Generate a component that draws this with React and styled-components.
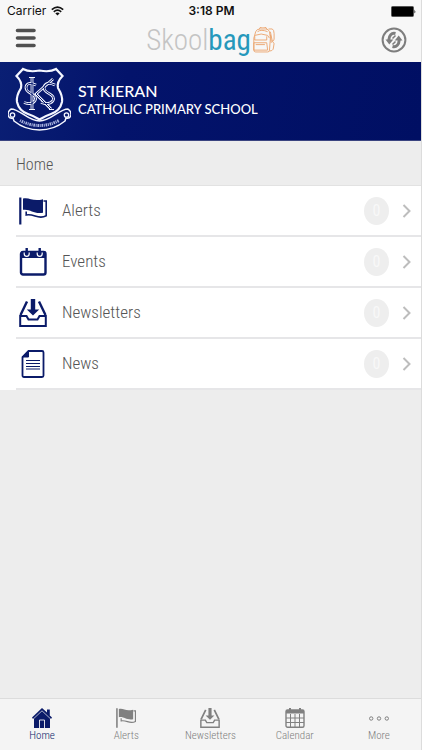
import React from 'react';
import styled, { createGlobalStyle, css } from 'styled-components';

const condensed = '"Roboto Condensed", "Liberation Sans Narrow", Roboto, sans-serif';
const navy = '#0b1b69';

const GlobalStyle = createGlobalStyle`
  * { box-sizing: border-box; }
  body { margin: 0; background: #ededed; font-family: ${condensed}; }
  button { font: inherit; color: inherit; background: none; border: 0; padding: 0; cursor: pointer; }
  svg { display: block; flex: none; }
`;

const Screen = styled.div`
  min-height: 100vh;
  display: flex;
  flex-direction: column;
  background: #ededed;
  border-right: 1px solid #dcdcdc;
`;

const StatusBar = styled.div`
  height: 22px;
  padding: 0 5px 0 7px;
  display: grid;
  grid-template-columns: 1fr auto 1fr;
  align-items: center;
  background: #f7f7f7;
  color: #111;
  font: 12px/22px Inter, sans-serif;
`;

const Carrier = styled.div`
  display: flex;
  align-items: center;
  gap: 5px;
`;

const Clock = styled.time`
  font-weight: 600;
`;

const Battery = styled.div`
  display: flex;
  justify-content: flex-end;
`;

const Header = styled.header`
  height: 40px;
  padding: 5px 14px 0;
  display: grid;
  grid-template-columns: 1fr auto 1fr;
  align-items: start;
  background: #f7f7f7;
`;

const IconButton = styled.button`
  display: flex;
  justify-self: ${(p) => (p.$end ? 'end' : 'start')};
`;

const Logo = styled.div`
  display: flex;
  align-items: center;
  font: 300 29px/26px ${condensed};
  color: #c4c4c4;
`;

const LogoAccent = styled.span`
  margin-right: 1px;
  color: #2598bb;
  font-weight: 400;
`;

const Banner = styled.section`
  height: 79px;
  padding: 0 8px;
  display: flex;
  align-items: center;
  gap: 7px;
  border-bottom: 1px solid #3a4480;
  background: linear-gradient(100deg, #0a1f74 0%, #03136b 30%, #000f63 100%);
  color: #fff;
`;

const SchoolName = styled.h1`
  margin: 0;
  display: flex;
  flex-direction: column;
  font: 500 13px/16px Lato, sans-serif;
`;

const SchoolTitle = styled.span`
  font-size: 16px;
  line-height: 20px;
  margin-top: -4px;
`;

const SectionTitle = styled.h2`
  margin: 0;
  height: 45px;
  padding: 2px 16px 0;
  border-bottom: 1px solid #e2e2e2;
  font-size: 16px;
  font-weight: 300;
  line-height: 44px;
  color: #555;
`;

const List = styled.ul`
  margin: 0;
  padding: 0 0 0 16px;
  list-style: none;
  background: #fff;
`;

const Row = styled.li`
  border-bottom: 2px solid #e6e6e8;
`;

const RowButton = styled.button`
  width: 100%;
  height: 49px;
  display: flex;
  align-items: center;
  text-align: left;
`;

const RowIcon = styled.span`
  width: 46px;
  padding-left: 3px;
  color: ${navy};
`;

const RowLabel = styled.span`
  flex: 1;
  padding-bottom: 2px;
  font-size: 17px;
  font-weight: 300;
  line-height: 24px;
  color: #555;
`;

const Count = styled.span`
  width: 25px;
  height: 28px;
  margin-right: 13px;
  border-radius: 50%;
  background: #eeeeee;
  color: #f8f8f8;
  font-size: 16px;
  line-height: 28px;
  text-align: center;
`;

const Chevron = styled.svg`
  margin-right: 9px;
`;

const TabBar = styled.nav`
  height: 52px;
  margin-top: auto;
  display: grid;
  grid-template-columns: repeat(5, 1fr);
  border-top: 1px solid #dcdcdc;
  background: #f4f4f4;
`;

const Tab = styled.button`
  && {
    display: flex;
    flex-direction: column;
    align-items: center;
    padding-top: 9px;
    gap: 1px;
    color: #808080;
    font-size: 11px;
    font-weight: 300;
    line-height: 14px;
    ${(p) => p.$active && css`color: ${navy};`}
  }
`;

const FlagIcon = ({ size }) => (
  <svg width={size} height={size} viewBox="0 0 28 28" fill="none" stroke="currentColor">
    <path d="M1.300 .5v27" strokeWidth="2.200" />
    <path d="M4 1.500c7-1.500 9 3.500 20 .8v13.500c-10 1.500-12-4-20-3z" fill="currentColor" stroke="none" />
    <path d="M24.500 4h2.700v14.800c-8 4.500-12-2.500-20-.8V14.500" strokeWidth="1.600" />
  </svg>
);

const EventsIcon = () => (
  <svg width="28" height="28" viewBox="0 0 28 28" fill="none" stroke={navy}>
    <rect x="2" y="4" width="24.500" height="22.500" rx="2" strokeWidth="2.400" />
    <path d="M2 3.500h24.500v6.500H2z" fill={navy} stroke="none" />
    <path d="M5.200 4.500v1.300a2.500 2.500 0 0 0 5 0V4.500M18.200 4.500v1.300a2.500 2.500 0 0 0 5 0V4.500" stroke="#fff" strokeWidth="1.200" />
    <path d="M7.700 0v6M20.700 0v6" strokeWidth="2.400" />
  </svg>
);

const InboxIcon = ({ size }) => (
  <svg width={size} height={size} viewBox="0 0 28 28" fill="none" stroke="currentColor" strokeWidth="2">
    <path d="M8 2.500 1.500 16M20 2.500l6.500 13.500" strokeWidth="2.400" />
    <path d="M1.200 17h6.300l2 3.500h9l2-3.500h6.300v10H1.200z" />
    <path d="M11.800 0h4.400v10.500h4L14 16.500l-6.200-6h4z" fill="currentColor" stroke="none" />
  </svg>
);

const NewsIcon = () => (
  <svg width="28" height="28" viewBox="0 0 28 28" fill="none" stroke={navy}>
    <path d="M9.500 1H23q1.500 0 1.500 1.500v23q0 1.500-1.500 1.500H5q-1.500 0-1.500-1.500V7z" strokeWidth="1.800" />
    <path d="M9.500 1v6h-6z" fill={navy} />
    <path d="M7 10.500h14M7 13.500h14M7 16.500h14M7 19h14" strokeWidth="1" />
  </svg>
);

const HomeIcon = () => (
  <svg width="20" height="20" viewBox="0 0 20 20" fill={navy}>
    <path d="M10 0 15 4.500V1.500h2.800v6L20 9.500l-1 1.500-1-.8V20H2v-9.800L1 11 0 9.500z" />
    <path d="m1.500 10.800 8.500-8 8.500 8" fill="none" stroke="#f4f4f4" strokeWidth=".7" />
    <path d="M7.500 20v-8h5v8" fill="none" stroke="#f4f4f4" strokeWidth=".9" />
  </svg>
);

const CalendarIcon = () => (
  <svg width="20" height="20" viewBox="0 0 20 20" fill="none" stroke="currentColor">
    <rect x="1" y="2" width="18" height="17.300" rx="1.500" strokeWidth="1.400" />
    <path d="M1 2h18v3.500H1z" fill="currentColor" stroke="none" />
    <path d="M1 10h18M1 14.500h18M5.500 6v13M10 6v13M14.500 6v13" />
    <path d="M5 0v3M15 0v3" strokeWidth="2" />
  </svg>
);

const MoreIcon = () => (
  <svg width="20" height="20" viewBox="0 0 20 20" fill="none" stroke="currentColor">
    <circle cx="2.200" cy="10.500" r="1.700" />
    <circle cx="10" cy="10.500" r="1.700" />
    <circle cx="17.800" cy="10.500" r="1.700" />
  </svg>
);

const WifiIcon = () => (
  <svg width="13" height="10" viewBox="0 0 13 10" fill="none" stroke="#111" strokeWidth="1.700">
    <path d="M.8 3.600q5.700-5 11.400 0M2.800 5.800q3.700-3.200 7.400 0" />
    <path d="M4.300 7.200q2.200-1.600 4.400 0L6.500 9.600z" fill="#111" stroke="none" />
  </svg>
);

const BatteryIcon = () => (
  <svg width="25" height="11" viewBox="0 0 25 11">
    <rect x=".5" y=".5" width="22" height="10" rx="1" stroke="#555" />
    <path d="M23.500 3.500q1.500 2 0 4z" />
  </svg>
);

const MenuIcon = () => (
  <svg width="24" height="22" viewBox="0 0 24 22" stroke="#505050" strokeWidth="3.600" strokeLinecap="round">
    <path d="M3.500 3.500h16.500M3.500 11h16.500M3.500 18.500h16.500" />
  </svg>
);

const RefreshIcon = () => (
  <svg width="26" height="26" viewBox="0 0 26 26" fill="none" stroke="#7e7e7e">
    <circle cx="13" cy="13" r="11.400" strokeWidth="2" />
    <path d="M14.500 6.500C10.500 5.500 8 8.500 7.800 13M11.500 19.500c4 1 6.500-2 6.700-6.500" strokeWidth="3" />
    <path d="M4.500 12.500h7.800L8.300 17.500zM21.500 13.500h-7.800l4-5z" fill="#7e7e7e" stroke="none" />
    <path d="m11.500 11.500 3-3M11.500 17.500l3-3" strokeWidth="1.500" />
  </svg>
);

const BackpackIcon = () => (
  <svg width="23" height="26" viewBox="0 0 25 28" fill="none" stroke="#eba56e" strokeWidth="1">
    <path d="M4 5q1-3 5-3h6q3 0 4 3l1 7-1 13q0 2-2 2H4q-2 0-2-2V12z" />
    <path d="M8 2q0-2 3-2h2q3 0 3 2M6 5q4-3 11 0M3 9q7-3 14 0l2 3M3 14h13v-4M3 14v-4M2 17h14l1 8H2zM4 19h10" />
    <path d="M18 2h4q2 1 2 5v6q0 2-2 2M20 5l2 10 2 3-1 6q-1 2-4 2M20 8l1 9" />
  </svg>
);

const Crest = () => (
  <svg width="63" height="68" viewBox="0 0 63 68" fill="none" stroke="#f4f6ff">
    <path
      d="M3 42C12 42 20 54 31.500 54S51 42 60 42q3 2 3 6-1 4-5 3l-1 3Q46 63 31.500 63T6 54l-1-3q-4 1-5-3 0-4 3-6z"
      fill="#07186d"
      strokeWidth="1.500"
    />
    <circle cx="4.500" cy="48" r="2.200" strokeWidth="1.300" />
    <circle cx="58.500" cy="48" r="2.200" strokeWidth="1.300" />
    <path d="M12 53.500q19.500 10 39 0" stroke="#aab4e0" strokeWidth="3" strokeDasharray="1 .8 1.600 .7" />
    <path
      d="M15 2q6 3.500 16.500 1.500Q42 5.500 48 2l6.500 7q-6 6-4.500 12 5 8 4 14-2 9-11 12-6 2-11.500 5.500Q26 49 20 47 11 44 9 35q-1-6 4-14Q14.500 15 8.500 9z"
      fill="#07186d"
      strokeWidth="2.200"
    />
    <g strokeWidth="2.800">
      <path d="M28 18q-9-4-10 2-.5 4 5 6.500 6 3 4 7-3 5-11 2M47 18q-9-4-11 2-.5 4 5 6.500 6 3 4 7-3 5-12 2" />
      <path d="M24 11v31M45 12 28 27l15 15" />
    </g>
    <g stroke="#07186d" strokeWidth="1">
      <path d="M28 18q-9-4-10 2-.5 4 5 6.500 6 3 4 7-3 5-11 2M47 18q-9-4-11 2-.5 4 5 6.500 6 3 4 7-3 5-12 2" />
      <path d="M24 11v31M45 12 28 27l15 15" />
    </g>
    <path d="M21 10.500h6M21 42.500h6M41 42.500h5" strokeWidth="1.200" />
  </svg>
);

const items = [
  { label: 'Alerts', icon: <FlagIcon size={28} /> },
  { label: 'Events', icon: <EventsIcon /> },
  { label: 'Newsletters', icon: <InboxIcon size={28} /> },
  { label: 'News', icon: <NewsIcon /> },
];

const tabs = [
  { label: 'Home', icon: <HomeIcon />, active: true },
  { label: 'Alerts', icon: <FlagIcon size={20} /> },
  { label: 'Newsletters', icon: <InboxIcon size={20} /> },
  { label: 'Calendar', icon: <CalendarIcon /> },
  { label: 'More', icon: <MoreIcon /> },
];

export default function App() {
  return (
    <Screen>
      <GlobalStyle />
      <StatusBar>
        <Carrier>Carrier <WifiIcon /></Carrier>
        <Clock>3:18 PM</Clock>
        <Battery><BatteryIcon /></Battery>
      </StatusBar>
      <Header>
        <IconButton aria-label="Menu"><MenuIcon /></IconButton>
        <Logo>Skool<LogoAccent>bag</LogoAccent><BackpackIcon /></Logo>
        <IconButton $end aria-label="Refresh"><RefreshIcon /></IconButton>
      </Header>
      <Banner>
        <Crest />
        <SchoolName>
          <SchoolTitle>ST KIERAN</SchoolTitle>
          <span>CATHOLIC PRIMARY SCHOOL</span>
        </SchoolName>
      </Banner>
      <SectionTitle>Home</SectionTitle>
      <List>
        {items.map((item) => (
          <Row key={item.label}>
            <RowButton>
              <RowIcon>{item.icon}</RowIcon>
              <RowLabel>{item.label}</RowLabel>
              <Count>0</Count>
              <Chevron width="10" height="16" viewBox="0 0 10 16" fill="none" stroke="#bdbdbd" strokeWidth="2">
                <path d="m1.500 2 6 6-6 6" />
              </Chevron>
            </RowButton>
          </Row>
        ))}
      </List>
      <TabBar>
        {tabs.map((tab) => (
          <Tab key={tab.label} $active={tab.active} aria-current={tab.active ? 'page' : undefined}>
            {tab.icon}
            {tab.label}
          </Tab>
        ))}
      </TabBar>
    </Screen>
  );
}
